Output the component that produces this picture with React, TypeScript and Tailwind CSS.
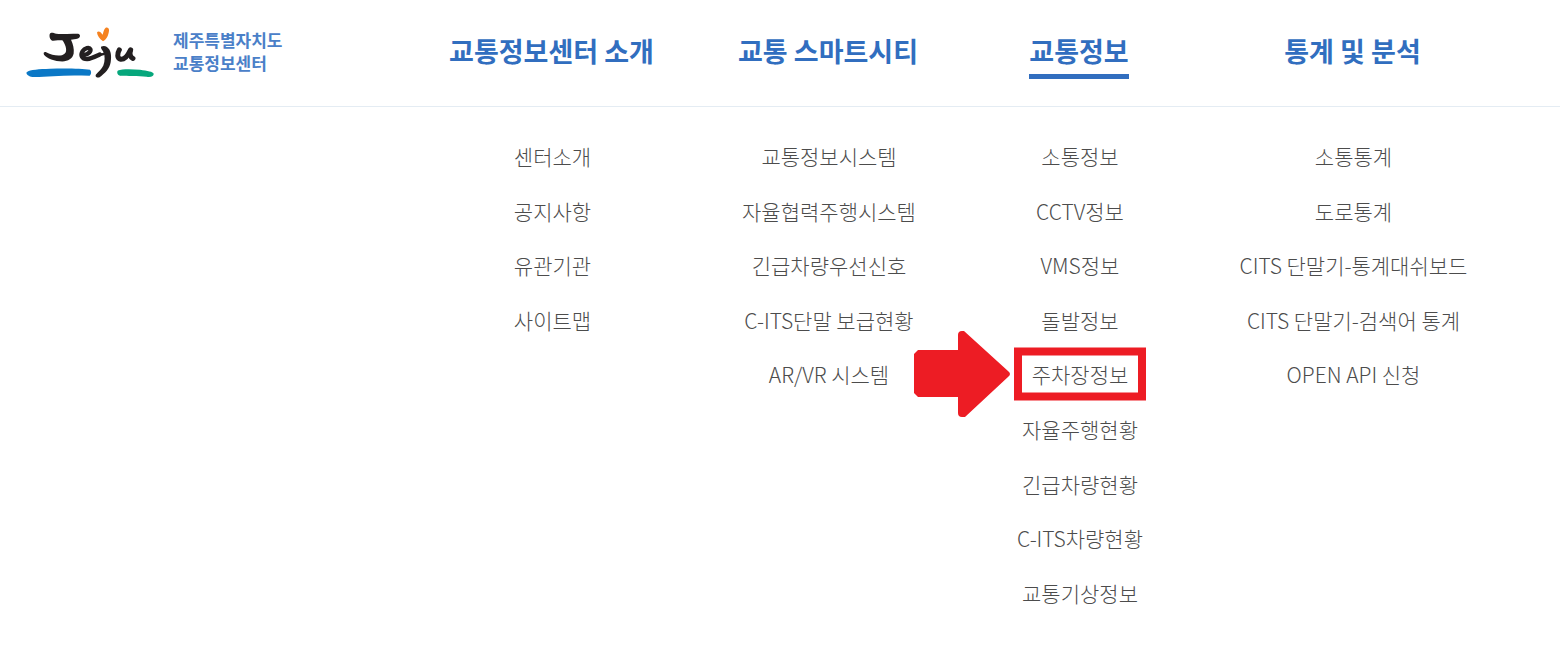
type MenuItem = {
	label: string
	highlighted?: boolean
}

type MenuGroup = {
	title: string
	active?: boolean
	items: MenuItem[]
}

const menu: MenuGroup[] = [
	{
		title: '교통정보센터 소개',
		items: [{ label: '센터소개' }, { label: '공지사항' }, { label: '유관기관' }, { label: '사이트맵' }],
	},
	{
		title: '교통 스마트시티',
		items: [
			{ label: '교통정보시스템' },
			{ label: '자율협력주행시스템' },
			{ label: '긴급차량우선신호' },
			{ label: 'C-ITS단말 보급현황' },
			{ label: 'AR/VR 시스템' },
		],
	},
	{
		title: '교통정보',
		active: true,
		items: [
			{ label: '소통정보' },
			{ label: 'CCTV정보' },
			{ label: 'VMS정보' },
			{ label: '돌발정보' },
			{ label: '주차장정보', highlighted: true },
			{ label: '자율주행현황' },
			{ label: '긴급차량현황' },
			{ label: 'C-ITS차량현황' },
			{ label: '교통기상정보' },
		],
	},
	{
		title: '통계 및 분석',
		items: [
			{ label: '소통통계' },
			{ label: '도로통계' },
			{ label: 'CITS 단말기-통계대쉬보드' },
			{ label: 'CITS 단말기-검색어 통계' },
			{ label: 'OPEN API 신청' },
		],
	},
]

function JejuLogo() {
	return (
		<svg viewBox="48 35 384 152" className="h-[51px] w-32 shrink-0" role="img" aria-label="Jeju">
			<path
				d="M50 170C60 163 88 161 120 160C160 158 215 159 240 163C245 168 244 177 239 181C200 180 165 180 130 182C100 183 72 187 60 183C54 180 47 175 50 170Z"
				fill="#0b78c6"
			/>
			<path
				d="M324 165C335 160 365 160 390 163C412 166 430 169 431 175C432 182 424 186 410 184C385 181 350 183 330 181C321 178 320 168 324 165Z"
				fill="#06a77c"
			/>
			<path
				d="M279 77C268 71 262 59 261 51C264 45 272 48 278 58C280 50 282 41 287 37C292 34 298 38 297 46C296 58 290 73 279 77Z"
				fill="#f58220"
			/>
			<g fill="#231f20">
				<path d="M119 56C122 50 128 51 139 55C160 57 181 53 204 55C213 57 211 67 204 69C196 72 189 71 183 73C189 86 193 101 191 114C188 130 174 137 157 138C135 138 109 129 102 118C99 111 103 108 110 111C124 119 143 122 156 119C169 115 170 106 167 94C165 86 161 79 157 74C148 74 139 74 130 76C122 76 117 65 119 56Z" />
				<path d="M274 93C284 88 293 94 298 102C304 112 304 126 302 140C299 159 285 173 269 185C261 188 254 183 258 177C266 167 275 162 280 150C285 137 285 122 281 112C279 105 270 99 274 93Z" />
			</g>
			<g fill="none" stroke="#231f20" strokeLinecap="round" strokeLinejoin="round">
				<path
					d="M222 119C235 115 244 108 241 101C238 94 224 97 218 107C210 120 216 131 231 131C246 129 258 122 269 117"
					strokeWidth="13"
				/>
				<path d="M269 117C276 118 286 113 289 111" strokeWidth="8" />
				<path d="M328 103C321 115 321 129 332 131C343 132 353 121 360 106" strokeWidth="15" />
				<path d="M362 103C358 116 361 125 369 129" strokeWidth="15" />
			</g>
		</svg>
	)
}

function HighlightMarker() {
	return (
		<>
			<span className="pointer-events-none absolute inset-x-1/2 top-1/2 -mx-[66px] h-[53px] -translate-y-1/2 border-8 border-[#ed1c24]" />
			<svg
				viewBox="0 0 96 86"
				className="pointer-events-none absolute top-1/2 right-full mr-[22px] h-[86px] w-24 -translate-y-1/2"
				aria-hidden="true"
			>
				<path
					d="M4 19H44V4Q44 0 48 0H50L94 40Q98 43 94 46L51 86H48Q44 86 44 82V66H4L0 62V23Z"
					fill="#ed1c24"
				/>
			</svg>
		</>
	)
}

export default function App() {
	return (
		<header className="min-h-screen bg-white font-['Noto_Sans_CJK_KR',sans-serif]">
			<div className="grid grid-cols-[414fr_275fr_278fr_224fr_323fr_46fr] border-b border-[#e4ecf3] pt-[26px] pb-[27px]">
				<a href="#" className="flex items-center gap-[19px] pl-[26px]">
					<JejuLogo />
					<span className="pb-1 text-[17px] leading-[23px] font-bold whitespace-nowrap text-[#4a80c8]">
						제주특별자치도
						<br />
						교통정보센터
					</span>
				</a>
				{menu.map((group) => (
					<div key={group.title} className="flex justify-center">
						<a
							href="#"
							className={`border-b-5 pt-0.5 text-[27px] leading-[46px] font-bold whitespace-nowrap text-[#316ebf] ${
								group.active ? 'border-[#316ebf]' : 'border-transparent'
							}`}
						>
							{group.title}
						</a>
					</div>
				))}
			</div>

			<nav className="grid grid-cols-[415fr_275fr_278fr_224fr_323fr_45fr] pt-[22px] pb-7">
				{menu.map((group) => (
					<ul
						key={group.title}
						aria-label={group.title}
						className="grid min-h-[491px] grid-rows-9 justify-items-center first:col-start-2"
					>
						{group.items.map((item) => (
							<li key={item.label} className="relative flex items-center">
								<a
									href="#"
									className="text-[21px] leading-8 font-light whitespace-nowrap text-[#4c4c4c]"
								>
									{item.label}
								</a>
								{item.highlighted && <HighlightMarker />}
							</li>
						))}
					</ul>
				))}
			</nav>
		</header>
	)
}
